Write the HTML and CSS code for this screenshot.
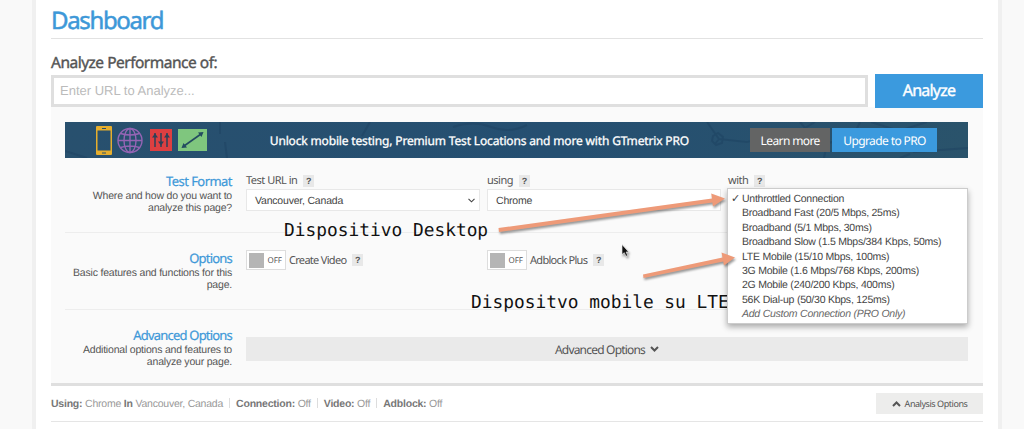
FILE: index.html
```html
<!DOCTYPE html>
<html lang="en">
<head>
<meta charset="utf-8">
<title>Dashboard</title>
<link rel="stylesheet" href="styles.css">
</head>
<body>
<main class="page">
  <h1 class="title"><span>Dashboard</span></h1>
  <h2 class="label"><span>Analyze Performance of:</span></h2>
  <div class="search">
    <div class="url"><span>Enter URL to Analyze...</span></div>
    <div class="analyze"><span>Analyze</span></div>
  </div>
  <section class="panel">
    <div class="banner">
      <svg class="network" viewBox="0 0 903 36" preserveAspectRatio="none">
        <g fill="none" stroke="#1d4261" stroke-width="2" opacity=".5">
          <path d="M155 0v12M160 20l2 16M305 0l-8 14M388 5q20-7 38 0t36-2M642 0l12 17 28 3 34-8M654 17l-4 5M735 0l5 6 10-6M759 36l3-15 25-4 8-17M806 0l28 9 28-9M835 9l14 21 54-4M0 29l22 7M845 32l-10 4"/>
          <path d="M648 14l5-3 5 4-1 6-6 2-4-4z"/>
        </g>
      </svg>
      <div class="icons">
        <svg class="phone" width="16" height="29" viewBox="0 0 16 29"><path fill="#e6ae2d" fill-rule="evenodd" d="M1 0h14q1 0 1 1v27q0 1-1 1H1q-1 0-1-1V1q0-1 1-1zM1.500 4.500v20h13v-20zM6 2v1h4V2zM6 26.500v1h4v-1z"/></svg>
        <svg class="globe" width="26" height="27" viewBox="0 0 26 27"><g fill="none" stroke="#9464b4" stroke-width="1.400"><circle cx="13" cy="13.500" r="12"/><ellipse cx="13" cy="13.500" rx="6" ry="12"/><path d="M13 1.500v24M1 13.500h24M3.500 6.500q9.500 3 19 0M3.500 20.500q9.500-3 19 0"/></g></svg>
        <svg class="sliders" width="22" height="22" viewBox="0 0 22 22"><path fill="#dd3f41" d="M0 0h22v22H0z"/><path stroke="#2c4158" stroke-width="1.500" d="M5 4v14M11 4v14M17 4v14"/><path fill="#2c4158" d="M2 8.500l3-4 3 4zM8 12.500h6l-3 4zM14 8.500l3-4 3 4z"/></svg>
        <svg width="29" height="22" viewBox="0 0 29 22"><path fill="#7fc67e" d="M0 0h29v22H0z"/><path stroke="#234b60" stroke-width="1.600" d="M6 17L23 5"/><path fill="#234b60" d="M25.500 3l-2 5-3.500-4.500zM3.500 19l2-5 3.500 4.500z"/></svg>
      </div>
      <p class="promo"><span>Unlock mobile testing, Premium Test Locations and more with GTmetrix PRO</span></p>
      <div class="learn"><span>Learn more</span></div>
      <div class="upgrade"><span>Upgrade to PRO</span></div>
    </div>

    <div class="row row-format">
      <div class="about"><h3 class="wide">Test Format</h3><p>Where and how do you want to analyze this page?</p></div>
      <div class="fields">
        <div class="field">
          <div class="caption"><span>Test URL in</span><i class="help">?</i></div>
          <div class="select"><span>Vancouver, Canada</span><svg width="7" height="5" viewBox="0 0 7 5"><path d="M.5.8l3 3 3-3" fill="none" stroke="#444" stroke-width="1.100"/></svg></div>
        </div>
        <div class="field">
          <div class="caption"><span>using</span><i class="help">?</i></div>
          <div class="select"><span>Chrome</span></div>
        </div>
        <div class="field">
          <div class="caption"><span>with</span><i class="help">?</i></div>
          <div class="select"></div>
          <ul class="menu">
            <li class="checked">Unthrottled Connection</li>
            <li>Broadband Fast (20/5 Mbps, 25ms)</li>
            <li>Broadband (5/1 Mbps, 30ms)</li>
            <li>Broadband Slow (1.5 Mbps/384 Kbps, 50ms)</li>
            <li>LTE Mobile (15/10 Mbps, 100ms)</li>
            <li>3G Mobile (1.6 Mbps/768 Kbps, 200ms)</li>
            <li>2G Mobile (240/200 Kbps, 400ms)</li>
            <li>56K Dial-up (50/30 Kbps, 125ms)</li>
            <li class="custom">Add Custom Connection (PRO Only)</li>
          </ul>
        </div>
      </div>
    </div>

    <div class="row row-options">
      <div class="about"><h3>Options</h3><p>Basic features and functions for this page.</p></div>
      <div class="fields">
        <div class="field toggle"><div class="switch"><b></b><span>OFF</span></div><span class="name">Create Video</span><i class="help">?</i></div>
        <div class="field toggle"><div class="switch"><b></b><span>OFF</span></div><span class="name">Adblock Plus</span><i class="help">?</i></div>
      </div>
    </div>

    <div class="row row-advanced">
      <div class="about"><h3>Advanced Options</h3><p>Additional options and features to analyze your page.</p></div>
      <div class="expand"><span>Advanced Options</span><svg width="9" height="6" viewBox="0 0 9 6"><path d="M1 1l3.500 3.500L8 1" fill="none" stroke="#555" stroke-width="2"/></svg></div>
    </div>
  </section>

  <footer class="summary">
    <p><b>Using:</b> Chrome <b>In</b> Vancouver, Canada<i></i><b>Connection:</b> Off<i></i><b>Video:</b> Off<i></i><b>Adblock:</b> Off</p>
    <div class="collapse"><svg width="9" height="6" viewBox="0 0 9 6"><path d="M1 5l3.500-3.500L8 5" fill="none" stroke="#555" stroke-width="2"/></svg><span>Analysis Options</span></div>
  </footer>
</main>

<div class="note note-desktop">Dispositivo Desktop</div>
<div class="note note-mobile">Dispositvo mobile su LTE</div>
<svg class="arrows" width="1024" height="429" viewBox="0 0 1024 429">
  <g fill="#ee9a78">
    <path d="M498.500 228L712 198.500l-.8-5L725 198.500l-12 8-.7-4L499 232z"/>
    <path d="M643 274.500L722.500 257.500l-1-5L735 257.500l-11 8-.8-4L643.500 278z"/>
  </g>
  <path d="M622 244.500v10l2.300-1.800 1.700 3.600 1.700-.8-1.600-3.500h2.600z" fill="#111" stroke="#fff" stroke-width=".6"/>
</svg>
</body>
</html>
```
FILE: styles.css
```css
* { box-sizing: border-box; }

body {
  margin: 0;
  height: 429px;
  overflow: hidden;
  background: #f9f9f9;
  font-family: "Liberation Sans", Arial, sans-serif;
  color: #555;
  text-rendering: geometricPrecision;
}

h1, h2, h3, p, ul { margin: 0; padding: 0; font-weight: 400; }
i { font-style: normal; }
span { white-space: nowrap; }

.page {
  width: 970px;
  height: 429px;
  margin-left: 32px;
  padding: 0 15px;
  border: solid #f0f0f0;
  border-width: 0 4px;
  background: #fff;
}

.title, .label, .analyze, .promo, .learn, .upgrade, h3, .caption, .name,
.switch, .expand, .collapse { font-family: "Noto Sans", "Open Sans", sans-serif; }

.title {
  height: 39px;
  padding-top: 5px;
  border-bottom: 1px solid #e2e2e2;
  color: #3d98d8;
  font-size: 24px;
  line-height: 32px;
  letter-spacing: -1.35px;
  -webkit-text-stroke: .5px #3d98d8;
}

.label {
  height: 36px;
  padding-top: 13px;
  font-size: 15.5px;
  line-height: 20px;
  letter-spacing: -.5px;
  -webkit-text-stroke: .4px #555;
}

.search { display: flex; gap: 7px; height: 33px; }
.url {
  flex: 1;
  height: 32px;
  padding-left: 6px;
  border: 3px solid #dfdfdf;
  background: #fff;
  color: #bbb;
  font-size: 13px;
  line-height: 26px;
}
.analyze {
  width: 108px;
  height: 34px;
  margin-top: -1px;
  background: #3b9ade;
  color: #fff;
  font-size: 16px;
  line-height: 32px;
  text-align: center;
  letter-spacing: -.8px;
  -webkit-text-stroke: .4px #fff;
}

.panel {
  height: 279px;
  margin-top: -1px;
  padding: 15px 15px 0 14px;
  border-bottom: 3px solid #dfdfdf;
  background: #fafafa;
}

.banner {
  display: flex;
  align-items: center;
  position: relative;
  height: 36px;
  padding: 0 31px;
  background: linear-gradient(90deg, #28506e, #254f71 55%, #2a536b);
}
.network { position: absolute; inset: 0; width: 100%; height: 36px; }
.icons { display: flex; align-items: center; position: relative; width: 173px; }
.globe { margin-left: 5px; }
.sliders { margin: 0 6px 0 7px; }
.promo {
  position: relative;
  width: 480px;
  padding: 2px 0 0 1px;
  color: #fff;
  font-size: 12px;
  line-height: 18px;
  letter-spacing: -.16px;
  -webkit-text-stroke: .3px #fff;
}
.learn, .upgrade {
  position: relative;
  height: 24px;
  color: #fff;
  font-size: 12px;
  line-height: 25px;
  text-align: center;
  letter-spacing: -.6px;
}
.learn { width: 80px; margin-left: 2px; background: #636464; }
.upgrade { width: 105px; margin-left: 2px; background: #3b9ade; }

.row { display: flex; gap: 14px; border-bottom: 1px solid #ededed; }
.row-format { height: 75px; padding-top: 15px; }
.row-options { height: 77px; padding-top: 17px; }
.row-advanced { border: 0; padding-top: 17px; }

.about { flex: none; width: 167px; text-align: right; }
.about p { padding-top: 1px; font-size: 10.5px; line-height: 12px; letter-spacing: -.2px; }
.about h3 {
  color: #3d98d8;
  font-size: 13px;
  line-height: 16px;
  white-space: nowrap;
  letter-spacing: -.8px;
  -webkit-text-stroke: .2px #3d98d8;
}
.about .wide { letter-spacing: -.55px; }

.fields { display: flex; flex: none; width: 722px; gap: 7px; }
.field { position: relative; width: 234px; }
.caption {
  display: flex;
  align-items: center;
  gap: 6px;
  height: 16px;
  padding-bottom: 1px;
  font-size: 11px;
  letter-spacing: -.5px;
}
.help {
  width: 11px;
  height: 12px;
  background: #e8e8e8;
  font: bold 9px/12px "Liberation Sans", Arial, sans-serif;
  letter-spacing: 0;
  text-align: center;
}
.select {
  display: flex;
  align-items: center;
  justify-content: space-between;
  height: 22px;
  padding: 1px 4px 0 8px;
  border: 1px solid #e8e8e8;
  background: #fff;
  color: #444;
  font-size: 10.5px;
  letter-spacing: -.2px;
}

.menu {
  position: absolute;
  z-index: 3;
  top: 15px;
  left: -1px;
  width: 241px;
  height: 136px;
  padding: 3px 0 0 14px;
  border: 1px solid #ccc;
  background: #fff;
  box-shadow: 0 3px 6px rgba(0, 0, 0, .32);
  color: #444;
  font-size: 10.5px;
  line-height: 14.4px;
  letter-spacing: -.24px;
  list-style: none;
  white-space: nowrap;
}
.checked::before {
  content: "✓";
  display: inline-block;
  width: 11px;
  margin-left: -11px;
  font: bold 11px/12px "DejaVu Sans", sans-serif;
}
.custom { color: #666; font-style: italic; }

.toggle { display: flex; align-items: center; height: 20px; }
.switch {
  display: flex;
  align-items: center;
  width: 40px;
  height: 20px;
  padding: 0 3px 0 2px;
  gap: 3px;
  border: 1px solid #ddd;
  background: #fff;
  font-size: 8px;
}
.switch b { width: 16px; height: 15px; background: #b5b5b5; }
.name { margin: 0 6px 0 3px; font-size: 11px; letter-spacing: -.7px; }

.expand {
  display: flex;
  align-items: center;
  justify-content: center;
  width: 722px;
  height: 24px;
  margin-top: 10px;
  gap: 5px;
  background: #eaeaea;
  font-size: 12px;
  letter-spacing: -.8px;
}

.summary {
  display: flex;
  justify-content: space-between;
  height: 36px;
  padding-top: 7px;
  border-bottom: 1px solid #e5e5e5;
  color: #999;
  font-size: 10.5px;
  line-height: 22px;
  letter-spacing: -.22px;
}
.summary b { color: #777; }
.summary i {
  display: inline-block;
  width: 1px;
  height: 10px;
  margin: 0 6px;
  background: #ddd;
  vertical-align: -1px;
}
.collapse {
  display: flex;
  align-items: center;
  justify-content: center;
  width: 107px;
  height: 21px;
  gap: 4px;
  background: #ededec;
  color: #555;
  font-size: 9px;
  letter-spacing: -.45px;
}

.note {
  position: absolute;
  z-index: 2;
  color: #111;
  font: 17.850px/22px "DejaVu Sans Mono", monospace;
  white-space: nowrap;
}
.note-desktop { left: 284px; top: 220px; }
.note-mobile { left: 471px; top: 292px; }
.arrows {
  position: absolute;
  z-index: 4;
  inset: 0;
  filter: drop-shadow(1px 2px 1px rgba(0, 0, 0, .4));
}
```
